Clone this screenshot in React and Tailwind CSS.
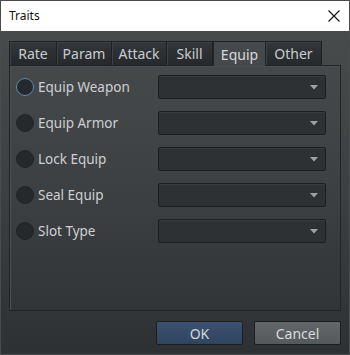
import React from "react";

const tabs = [
  { label: "Rate", w: "w-[48px]" },
  { label: "Param", w: "w-[55px]" },
  { label: "Attack", w: "w-[55px]" },
  { label: "Skill", w: "w-[46px]" },
  { label: "Equip", w: "w-[53px]", active: true },
  { label: "Other", w: "w-[56px]" },
];

const rows = ["Equip Weapon", "Equip Armor", "Lock Equip", "Seal Equip", "Slot Type"];

function Combo() {
  return (
    <div className="w-[168px] h-[24px] rounded-[2px] border border-[#1c1e20] bg-[#2e3134] shadow-[inset_0_1px_0_#383b3e] flex items-center justify-end pr-[7px]">
      <svg width="8" height="5" viewBox="0 0 8 5">
        <path d="M0 0 H8 L4 4.5 Z" fill="#9ea2a6" />
      </svg>
    </div>
  );
}

export default function App() {
  return (
    <div
      className="w-[350px] h-[355px] flex flex-col border border-[#4b4b4b] bg-white"
      style={{ fontFamily: '"Noto Sans", "Open Sans", sans-serif' }}
    >
      <div className="h-[30px] shrink-0 bg-white flex items-center justify-between pl-[8px] pr-[9px]">
        <span className="text-[12px] text-[#111] leading-none">Traits</span>
        <svg width="12" height="12" viewBox="0 0 12 12">
          <path d="M0.5 0.5 L11.5 11.5 M11.5 0.5 L0.5 11.5" stroke="#111" strokeWidth="1.1" />
        </svg>
      </div>
      <div className="flex-1 flex flex-col bg-gradient-to-b from-[#474b4c] via-[#3c4042] to-[#2e3134] pt-[10px] pl-[8px] pr-[8px] pb-[9px]">
        <div className="flex h-[24px] items-end">
          {tabs.map((t, i) =>
            t.active ? (
              <div
                key={t.label}
                className={`${t.w} h-[25px] -mb-px relative z-10 border border-b-0 border-[#222426] bg-[#45494b] flex items-center justify-center text-[14px] text-[#d6d9dc]`}
              >
                {t.label}
              </div>
            ) : (
              <div
                key={t.label}
                className={`${t.w} h-[24px] border-t border-r ${i === 0 ? "border-l" : ""} border-[#1e2022] bg-gradient-to-b from-[#33373a] to-[#26292b] shadow-[inset_1px_1px_0_#3c4043] flex items-center justify-center text-[14px] text-[#c8ccd0]`}
              >
                {t.label}
              </div>
            )
          )}
        </div>
        <div className="h-[246px] border border-[#222426] shadow-[inset_1px_1px_0_#4a4e50] flex flex-col gap-[12px] pt-[9px] pl-[6px]">
          {rows.map((r, i) => (
            <div key={r} className="flex items-center h-[24px]">
              <div className="w-[142px] flex items-center">
                <div
                  className={`w-[18px] h-[18px] rounded-full bg-[#26292c] border ${
                    i === 0 ? "border-[#5d88b0] border-[1.5px]" : "border-[#222427]"
                  }`}
                />
                <span className="ml-[4px] text-[13.5px] text-[#cdd0d3]">{r}</span>
              </div>
              <Combo />
            </div>
          ))}
        </div>
        <div className="flex justify-end gap-[11px] mt-[10px]">
          <button className="w-[87px] h-[24px] rounded-[2px] border border-[#1c1f22] bg-gradient-to-b from-[#3b5170] to-[#30445e] text-[14px] text-[#d4d8dc]">
            OK
          </button>
          <button className="w-[87px] h-[24px] rounded-[2px] border border-[#1c1f22] bg-gradient-to-b from-[#63676a] to-[#56595c] text-[14px] text-[#d8dbde]">
            Cancel
          </button>
        </div>
      </div>
    </div>
  );
}
